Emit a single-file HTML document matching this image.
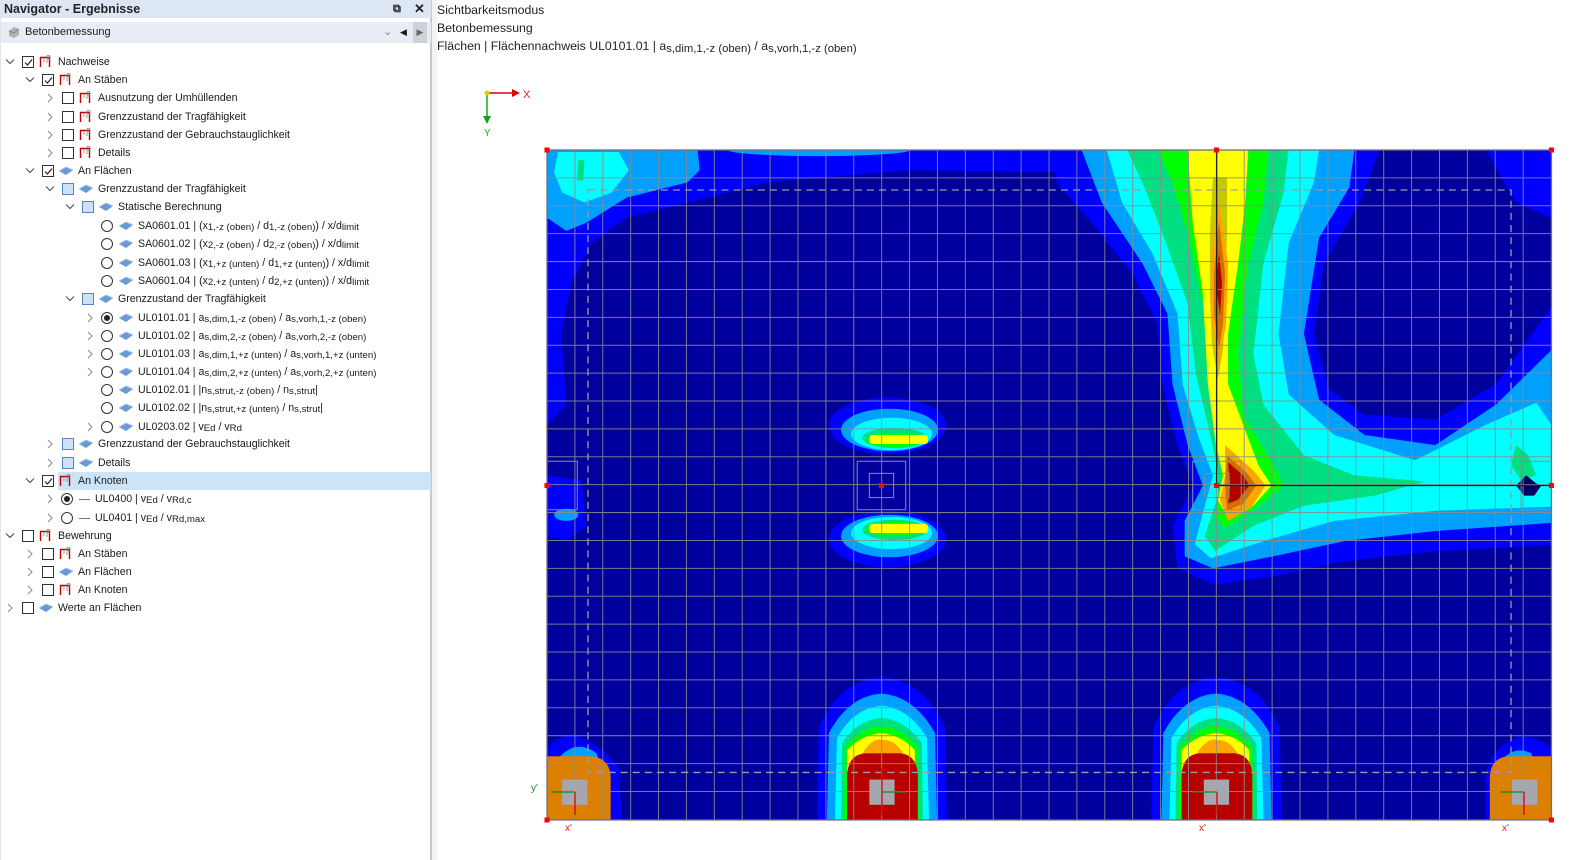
<!DOCTYPE html>
<html><head><meta charset="utf-8"><style>
*{margin:0;padding:0;box-sizing:border-box}
body{width:1585px;height:860px;position:relative;overflow:hidden;background:#fff;font-family:"Liberation Sans",sans-serif;color:#1a1a1a}
#panel{position:absolute;left:0;top:0;width:432px;height:860px;background:#fff;border-left:1px solid #e4e4ec;border-right:2px solid #c8c8d0}
#strip{position:absolute;left:432px;top:0;width:5px;height:860px;background:#f3f3f3}
.title{position:absolute;left:0;top:0;width:430px;height:18px;background:#dde7f3;font-weight:bold;font-size:12.5px;line-height:18px;padding-left:3px;color:#222}
.dd{position:absolute;left:0;top:22px;width:430px;height:21px;background:#e9ecf4;font-size:11px;line-height:21px}
.r{position:absolute;height:18px;line-height:18px;font-size:10.6px;white-space:nowrap}
.sel{position:absolute;left:57px;top:472px;width:373px;height:18px;background:#cce4f7}
.cb{position:absolute;width:12px;height:12px;border:1px solid #333;background:#fff}
.cb.p{background:#cde2f6;border-color:#5a86c0}
.rd{position:absolute;width:12px;height:12px;border:1px solid #333;border-radius:50%;background:#fff}
.rd.s::after{content:"";position:absolute;left:2px;top:2px;width:6px;height:6px;border-radius:50%;background:#222}
sub{font-size:9.6px;vertical-align:-1px}
.hd{position:absolute;left:437px;font-size:12.3px;color:#222}
.hd sub{font-size:11.3px;vertical-align:-2px}
</style></head><body>

<svg style="position:absolute;left:0;top:0" width="1585" height="860" xmlns="http://www.w3.org/2000/svg">
<defs><clipPath id="pl"><rect x="541" y="148" width="994" height="663"/></clipPath></defs>
<g transform="translate(547,150) scale(1.0105) translate(-541,-148)">
<g clip-path="url(#pl)">
<rect x="541" y="148" width="994" height="663" fill="#00009e"/>
<path d="M541,148 L1060,148 L1060,170 L900,168 L760,180 L700,195 L620,215 L585,240 L565,280 L555,330 L560,400 L541,420 Z" fill="#0000ff"/>
<path d="M541,148 L690,148 L692,168 L680,180 L620,195 L580,220 L560,228 L541,215 Z" fill="#00a0ff"/>
<ellipse cx="810" cy="148" rx="90" ry="6" fill="#00a0ff"/>
<path d="M552,150 L612,150 L622,168 L605,190 L578,200 L556,190 L548,170 Z" fill="#00ffff"/>
<path d="M572,158 L578,158 L577,178 L571,178 Z" fill="#00e080"/>
<path d="M541,470 L575,475 L580,520 L560,535 L541,530 Z" fill="#0000ff"/>
<ellipse cx="560" cy="509" rx="12" ry="6" fill="#00a0ff"/>
<path d="M1045,148 L1365,148 L1345,200 L1310,260 L1300,330 L1315,385 L1350,410 L1420,415 L1480,380 L1535,303 L1535,539 L1420,545 L1330,555 L1260,570 L1200,578 L1165,562 L1160,520 L1180,480 L1165,440 L1150,380 L1145,320 L1120,270 L1080,220 L1045,180 Z" fill="#0000ff"/>
<path d="M1470,148 L1535,148 L1535,215 L1500,200 Z" fill="#0000ff"/>
<path d="M1070,148 L1340,148 L1335,185 L1305,235 L1290,330 L1305,395 L1350,430 L1420,440 L1480,400 L1535,346 L1535,517 L1420,525 L1330,535 L1260,550 L1200,562 L1172,550 L1172,515 L1190,480 L1175,440 L1160,380 L1155,310 L1130,260 L1090,200 Z" fill="#00a0ff"/>
<path d="M1095,148 L1305,148 L1300,180 L1275,240 L1265,330 L1275,390 L1320,430 L1400,455 L1470,420 L1520,398 L1535,420 L1535,501 L1420,505 L1320,515 L1250,535 L1198,552 L1182,538 L1192,500 L1200,470 L1185,430 L1170,380 L1165,310 L1140,250 L1110,200 Z" fill="#00ffff"/>
<path d="M1115,148 L1275,148 L1270,190 L1250,260 L1240,350 L1250,400 L1290,450 L1340,470 L1410,476 L1360,490 L1290,500 L1240,520 L1202,545 L1192,530 L1205,490 L1205,465 L1195,420 L1183,370 L1175,300 L1150,230 L1130,180 Z" fill="#00e080"/>
<path d="M1500,440 L1512,450 L1520,470 L1505,475 L1495,460 Z" fill="#00e080"/>
<path d="M1145,148 L1255,148 L1250,200 L1235,260 L1225,350 L1230,410 L1260,460 L1270,480 L1245,500 L1212,522 L1202,510 L1210,480 L1205,440 L1195,380 L1190,300 L1175,230 L1160,180 Z" fill="#00ff00"/>
<path d="M1175,148 L1235,148 L1232,200 L1225,260 L1215,330 L1215,380 L1230,420 L1245,460 L1258,480 L1240,500 L1215,512 L1205,495 L1210,470 L1203,440 L1195,380 L1190,290 L1180,220 Z" fill="#ffff00"/>
<path d="M1200,175 L1214,175 L1214,230 L1212,290 L1210,345 L1205,375 L1199,340 L1197,290 L1197,230 Z" fill="#c8c800"/>
<path d="M1205,195 L1215,260 L1213,320 L1206,360 L1199,320 L1198,260 Z" fill="#ffa500"/>
<path d="M1206,218 L1212,270 L1210,320 L1206,345 L1201,310 L1201,270 Z" fill="#d07000"/>
<path d="M1206,250 L1209,280 L1207,312 L1203,280 Z" fill="#b00000"/>
<path d="M1212,440 L1240,465 L1252,480 L1238,502 L1215,515 L1207,495 L1212,470 Z" fill="#ffa500"/>
<path d="M1214,450 L1234,468 L1243,480 L1230,498 L1214,505 L1212,480 Z" fill="#d07000"/>
<path d="M1215,457 L1230,470 L1236,480 L1225,494 L1215,498 L1217,480 Z" fill="#b00000"/>
<path d="M1500,480 L1510,470 L1520,478 L1525,480 L1518,490 L1508,490 Z" fill="#000060"/>
<ellipse cx="878" cy="421" rx="58" ry="28" fill="#0000ff"/>
<ellipse cx="880" cy="425" rx="48" ry="21" fill="#00a0ff"/>
<ellipse cx="882" cy="429" rx="40" ry="16" fill="#00ffff"/>
<ellipse cx="885" cy="433" rx="32" ry="10" fill="#00e080"/>
<ellipse cx="886" cy="435" rx="29" ry="7" fill="#00ff00"/>
<rect x="860" y="430" width="58" height="9" rx="3" fill="#ffff00"/>
<ellipse cx="878" cy="533" rx="58" ry="28" fill="#0000ff"/>
<ellipse cx="880" cy="530" rx="48" ry="21" fill="#00a0ff"/>
<ellipse cx="882" cy="527" rx="40" ry="16" fill="#00ffff"/>
<ellipse cx="885" cy="524" rx="32" ry="10" fill="#00e080"/>
<ellipse cx="886" cy="523" rx="29" ry="7" fill="#00ff00"/>
<rect x="860" y="518" width="58" height="9" rx="3" fill="#ffff00"/>
<g id="col">
<path d="M808,811 L810,720 Q830,672 872,670 Q914,672 935,720 L937,811 Z" fill="#0000ff"/>
<path d="M818,811 L820,725 Q840,688 872,686 Q904,688 925,725 L927,811 Z" fill="#00a0ff"/>
<path d="M826,811 L828,730 Q845,700 872,698 Q899,700 917,730 L919,811 Z" fill="#00ffff"/>
<path d="M832,811 L833,735 Q848,712 872,710 Q896,712 912,735 L913,811 Z" fill="#00e080"/>
<path d="M835,811 L836,740 Q850,720 872,718 Q894,720 908,740 L909,811 Z" fill="#00ff00"/>
<path d="M838,811 L838,742 Q852,727 872,725 Q892,727 905,742 L905,811 Z" fill="#ffff00"/>
<path d="M845,760 Q860,728 872,732 Q890,730 900,760 Z" fill="#ffa500"/>
<path d="M838,811 L838,765 Q840,745 858,745 L888,745 Q906,745 908,765 L908,811 Z" fill="#b80000"/>
</g>
<use href="#col" transform="translate(331,0)"/>
<path d="M541,811 L541,740 Q560,720 580,732 Q600,742 612,760 L615,811 Z" fill="#0000ff"/>
<path d="M552,750 Q570,730 590,745 L595,760 L552,760Z" fill="#00a0ff"/>
<path d="M541,811 L541,748 L585,748 Q604,750 604,770 L604,811 Z" fill="#dd8000"/>
<path d="M1535,811 L1535,740 Q1510,720 1490,735 Q1472,748 1470,770 L1470,811 Z" fill="#0000ff"/>
<path d="M1480,760 Q1495,735 1515,745 L1520,760 Z" fill="#00a0ff"/>
<path d="M1535,811 L1535,748 L1492,748 Q1474,750 1474,770 L1474,811 Z" fill="#dd8000"/>
<g stroke="#8c8c8c" stroke-width="1" opacity="0.85">
<path d="M568.6,148V811M596.2,148V811M623.8,148V811M651.4,148V811M679,148V811M706.6,148V811M734.2,148V811M761.8,148V811M789.4,148V811M817,148V811M844.6,148V811M872.2,148V811M899.8,148V811M927.4,148V811M955,148V811M982.6,148V811M1010.2,148V811M1037.8,148V811M1065.4,148V811M1093,148V811M1120.6,148V811M1148.2,148V811M1175.8,148V811M1203.4,148V811M1231,148V811M1258.6,148V811M1286.2,148V811M1313.8,148V811M1341.4,148V811M1369,148V811M1396.6,148V811M1424.2,148V811M1451.8,148V811M1479.4,148V811M1507,148V811"/>
<path d="M541,175.6H1535M541,203.2H1535M541,230.8H1535M541,258.4H1535M541,286H1535M541,313.6H1535M541,341.2H1535M541,368.8H1535M541,396.4H1535M541,424H1535M541,451.6H1535M541,479.2H1535M541,506.8H1535M541,534.4H1535M541,562H1535M541,589.6H1535M541,617.2H1535M541,644.8H1535M541,672.4H1535M541,700H1535M541,727.6H1535M541,755.2H1535M541,782.8H1535"/>
</g>
<g fill="none" stroke="#8c8c8c" stroke-width="1">
<rect x="848" y="456" width="48" height="48"/><rect x="860" y="468" width="24" height="24"/>
<rect x="1180" y="456" width="48" height="48"/><rect x="1192" y="468" width="24" height="24"/>
<rect x="541" y="456" width="30" height="48"/><rect x="1505" y="456" width="30" height="48"/>
</g>
<rect x="581.6" y="187.6" width="913.4" height="576.4" fill="none" stroke="#9a9aa8" stroke-width="1.3" stroke-dasharray="7,5"/>
<g fill="#a6a6ae"><rect x="556" y="771" width="25" height="25"/><rect x="860" y="771" width="25" height="25"/><rect x="1191" y="771" width="25" height="25"/><rect x="1496" y="771" width="25" height="25"/></g>
</g>
<rect x="541" y="148" width="994" height="663" fill="none" stroke="#707080" stroke-width="1.3"/>
<path d="M1203.7,148V480H1535" stroke="#202020" stroke-width="1.3" fill="none"/>
<g fill="#ff0000"><rect x="538.5" y="145.5" width="5" height="5"/><rect x="1201" y="145.5" width="5" height="5"/><rect x="1532.5" y="145.5" width="5" height="5"/><rect x="538.5" y="477.5" width="5" height="5"/><rect x="869.5" y="477.5" width="5" height="5"/><rect x="1201" y="477.5" width="5" height="5"/><rect x="1532.5" y="477.5" width="5" height="5"/><rect x="538.5" y="808.5" width="5" height="5"/><rect x="1532.5" y="808.5" width="5" height="5"/></g>
</g>
<g stroke-width="1.3">
<path d="M575,792V815" stroke="#e00000"/><path d="M575,792H551" stroke="#109010"/>
<path d="M882,792V815" stroke="#e00000"/><path d="M882,792H906" stroke="#109010"/><path d="M882,792V768" stroke="#e00000"/>
<path d="M1217,792V815" stroke="#e00000"/><path d="M1217,792H1193" stroke="#109010"/>
<path d="M1524,792V815" stroke="#e00000"/><path d="M1524,792H1500" stroke="#109010"/>
</g>
<g font-family="Liberation Sans" font-size="10"><text x="565" y="831" fill="#e02020">x'</text><text x="531" y="791" fill="#208020">y'</text><text x="1199" y="831" fill="#e02020">x'</text><text x="1502" y="831" fill="#e02020">x'</text></g>
<path d="M487,93H512" stroke="#e00000" stroke-width="1.5"/><path d="M512,89L520,93L512,97Z" fill="#e00000"/>
<path d="M487,93V118" stroke="#10b010" stroke-width="1.5"/><path d="M483,116L487,124L491,116Z" fill="#10a010"/>
<circle cx="487" cy="93" r="2.5" fill="#e0d000"/>
<text x="523" y="98" font-family="Liberation Sans" font-size="11" fill="#e02020">X</text>
<text x="484" y="136" font-family="Liberation Sans" font-size="10" fill="#20b020">Y</text>
</svg>

<div class="hd" style="top:3px">Sichtbarkeitsmodus</div>
<div class="hd" style="top:21px">Betonbemessung</div>
<div class="hd" style="top:39px">Flächen | Flächennachweis UL0101.01 | a<sub>s,dim,1,-z (oben)</sub> / a<sub>s,vorh,1,-z (oben)</sub></div>

<div id="panel">
<div class="title">Navigator - Ergebnisse<span style="position:absolute;left:392px;top:0;font-size:11px">⧉</span><span style="position:absolute;left:413px;top:0;font-size:13px">✕</span></div>
<div class="dd"><svg style="position:absolute;left:6px;top:4px" width="14" height="13"><path d="M2,5 L7,1 L12,3 L12,9 L7,12 L2,10Z" fill="#b0b0b0"/><path d="M2,5 L7,7 L12,3" stroke="#888" fill="none"/></svg><span style="position:absolute;left:24px">Betonbemessung</span><span style="position:absolute;left:382px;color:#888">⌄</span><span style="position:absolute;left:399px;font-size:9px">◀</span><span style="position:absolute;left:412px;width:14px;height:21px;background:#cfd1d8;font-size:9px;text-align:center;color:#666">▶</span></div>
<div class="sel"></div>
</div>
<div id="strip"></div>

<svg width="0" height="0" style="position:absolute"><defs>
<g id="pt"><path d="M1.5,12V2.5H10.5V12" stroke="#c00000" stroke-width="1.4" fill="none"/><path d="M5,3V7M8,3V8" stroke="#999" stroke-width="1"/><circle cx="9.5" cy="2" r="1.7" fill="none" stroke="#888" stroke-width="0.8"/></g>
<g id="sf"><path d="M1,6 L8,2 L15,5 L8,10Z" fill="#6a9ad6"/><path d="M1,6 L8,2 L15,5" fill="none" stroke="#a9c6ea"/></g>
</defs></svg>

<div style="position:absolute;left:0;top:0;width:430px;height:860px;font-size:11px">
<svg style="position:absolute;left:5px;top:58px" width="10" height="8"><path d="M1,1.5L5,5.5L9,1.5" stroke="#444" fill="none"/></svg>
<div class="cb" style="left:22px;top:56px"></div><svg style="position:absolute;left:24px;top:58px" width="9" height="9"><path d="M1,4.5L3.5,7L8,1.5" stroke="#222" fill="none" stroke-width="1.2"/></svg>
<svg style="position:absolute;left:39px;top:55px" width="14" height="14"><use href="#pt"/></svg>
<div class="r" style="left:58px;top:53px">Nachweise</div>

<svg style="position:absolute;left:25px;top:76px" width="10" height="8"><path d="M1,1.5L5,5.5L9,1.5" stroke="#444" fill="none"/></svg>
<div class="cb" style="left:42px;top:74px"></div><svg style="position:absolute;left:44px;top:76px" width="9" height="9"><path d="M1,4.5L3.5,7L8,1.5" stroke="#222" fill="none" stroke-width="1.2"/></svg>
<svg style="position:absolute;left:59px;top:73px" width="14" height="14"><use href="#pt"/></svg>
<div class="r" style="left:78px;top:71px">An Stäben</div>

<svg style="position:absolute;left:46px;top:93px" width="8" height="10"><path d="M2,1L6,5L2,9" stroke="#888" fill="none"/></svg>
<div class="cb" style="left:62px;top:92px"></div><svg style="position:absolute;left:79px;top:91px" width="14" height="14"><use href="#pt"/></svg>
<div class="r" style="left:98px;top:89px">Ausnutzung der Umhüllenden</div>

<svg style="position:absolute;left:46px;top:112px" width="8" height="10"><path d="M2,1L6,5L2,9" stroke="#888" fill="none"/></svg>
<div class="cb" style="left:62px;top:111px"></div><svg style="position:absolute;left:79px;top:110px" width="14" height="14"><use href="#pt"/></svg>
<div class="r" style="left:98px;top:108px">Grenzzustand der Tragfähigkeit</div>

<svg style="position:absolute;left:46px;top:130px" width="8" height="10"><path d="M2,1L6,5L2,9" stroke="#888" fill="none"/></svg>
<div class="cb" style="left:62px;top:129px"></div><svg style="position:absolute;left:79px;top:128px" width="14" height="14"><use href="#pt"/></svg>
<div class="r" style="left:98px;top:126px">Grenzzustand der Gebrauchstauglichkeit</div>

<svg style="position:absolute;left:46px;top:148px" width="8" height="10"><path d="M2,1L6,5L2,9" stroke="#888" fill="none"/></svg>
<div class="cb" style="left:62px;top:147px"></div><svg style="position:absolute;left:79px;top:146px" width="14" height="14"><use href="#pt"/></svg>
<div class="r" style="left:98px;top:144px">Details</div>

<svg style="position:absolute;left:25px;top:167px" width="10" height="8"><path d="M1,1.5L5,5.5L9,1.5" stroke="#444" fill="none"/></svg>
<div class="cb" style="left:42px;top:165px"></div><svg style="position:absolute;left:44px;top:167px" width="9" height="9"><path d="M1,4.5L3.5,7L8,1.5" stroke="#222" fill="none" stroke-width="1.2"/></svg>
<svg style="position:absolute;left:58px;top:165px" width="16" height="12"><use href="#sf"/></svg>
<div class="r" style="left:78px;top:162px">An Flächen</div>

<svg style="position:absolute;left:45px;top:185px" width="10" height="8"><path d="M1,1.5L5,5.5L9,1.5" stroke="#444" fill="none"/></svg>
<div class="cb p" style="left:62px;top:183px"></div><svg style="position:absolute;left:78px;top:183px" width="16" height="12"><use href="#sf"/></svg>
<div class="r" style="left:98px;top:180px">Grenzzustand der Tragfähigkeit</div>

<svg style="position:absolute;left:65px;top:203px" width="10" height="8"><path d="M1,1.5L5,5.5L9,1.5" stroke="#444" fill="none"/></svg>
<div class="cb p" style="left:82px;top:201px"></div><svg style="position:absolute;left:98px;top:201px" width="16" height="12"><use href="#sf"/></svg>
<div class="r" style="left:118px;top:198px">Statische Berechnung</div>

<div class="rd" style="left:101px;top:220px"></div><svg style="position:absolute;left:118px;top:220px" width="16" height="12"><use href="#sf"/></svg>
<div class="r" style="left:138px;top:217px">SA0601.01 | (x<sub>1,-z (oben)</sub> / d<sub>1,-z (oben)</sub>) / x/d<sub>limit</sub></div>
<div class="rd" style="left:101px;top:238px"></div><svg style="position:absolute;left:118px;top:238px" width="16" height="12"><use href="#sf"/></svg>
<div class="r" style="left:138px;top:235px">SA0601.02 | (x<sub>2,-z (oben)</sub> / d<sub>2,-z (oben)</sub>) / x/d<sub>limit</sub></div>
<div class="rd" style="left:101px;top:257px"></div><svg style="position:absolute;left:118px;top:257px" width="16" height="12"><use href="#sf"/></svg>
<div class="r" style="left:138px;top:254px">SA0601.03 | (x<sub>1,+z (unten)</sub> / d<sub>1,+z (unten)</sub>) / x/d<sub>limit</sub></div>
<div class="rd" style="left:101px;top:275px"></div><svg style="position:absolute;left:118px;top:275px" width="16" height="12"><use href="#sf"/></svg>
<div class="r" style="left:138px;top:272px">SA0601.04 | (x<sub>2,+z (unten)</sub> / d<sub>2,+z (unten)</sub>) / x/d<sub>limit</sub></div>

<svg style="position:absolute;left:65px;top:295px" width="10" height="8"><path d="M1,1.5L5,5.5L9,1.5" stroke="#444" fill="none"/></svg>
<div class="cb p" style="left:82px;top:293px"></div><svg style="position:absolute;left:98px;top:293px" width="16" height="12"><use href="#sf"/></svg>
<div class="r" style="left:118px;top:290px">Grenzzustand der Tragfähigkeit</div>

<svg style="position:absolute;left:86px;top:313px" width="8" height="10"><path d="M2,1L6,5L2,9" stroke="#888" fill="none"/></svg>
<div class="rd s" style="left:101px;top:312px"></div><svg style="position:absolute;left:118px;top:312px" width="16" height="12"><use href="#sf"/></svg>
<div class="r" style="left:138px;top:309px">UL0101.01 | a<sub>s,dim,1,-z (oben)</sub> / a<sub>s,vorh,1,-z (oben)</sub></div>
<svg style="position:absolute;left:86px;top:331px" width="8" height="10"><path d="M2,1L6,5L2,9" stroke="#888" fill="none"/></svg>
<div class="rd" style="left:101px;top:330px"></div><svg style="position:absolute;left:118px;top:330px" width="16" height="12"><use href="#sf"/></svg>
<div class="r" style="left:138px;top:327px">UL0101.02 | a<sub>s,dim,2,-z (oben)</sub> / a<sub>s,vorh,2,-z (oben)</sub></div>
<svg style="position:absolute;left:86px;top:349px" width="8" height="10"><path d="M2,1L6,5L2,9" stroke="#888" fill="none"/></svg>
<div class="rd" style="left:101px;top:348px"></div><svg style="position:absolute;left:118px;top:348px" width="16" height="12"><use href="#sf"/></svg>
<div class="r" style="left:138px;top:345px">UL0101.03 | a<sub>s,dim,1,+z (unten)</sub> / a<sub>s,vorh,1,+z (unten)</sub></div>
<svg style="position:absolute;left:86px;top:367px" width="8" height="10"><path d="M2,1L6,5L2,9" stroke="#888" fill="none"/></svg>
<div class="rd" style="left:101px;top:366px"></div><svg style="position:absolute;left:118px;top:366px" width="16" height="12"><use href="#sf"/></svg>
<div class="r" style="left:138px;top:363px">UL0101.04 | a<sub>s,dim,2,+z (unten)</sub> / a<sub>s,vorh,2,+z (unten)</sub></div>
<div class="rd" style="left:101px;top:384px"></div><svg style="position:absolute;left:118px;top:384px" width="16" height="12"><use href="#sf"/></svg>
<div class="r" style="left:138px;top:381px">UL0102.01 | |n<sub>s,strut,-z (oben)</sub> / n<sub>s,strut</sub>|</div>
<div class="rd" style="left:101px;top:402px"></div><svg style="position:absolute;left:118px;top:402px" width="16" height="12"><use href="#sf"/></svg>
<div class="r" style="left:138px;top:399px">UL0102.02 | |n<sub>s,strut,+z (unten)</sub> / n<sub>s,strut</sub>|</div>
<svg style="position:absolute;left:86px;top:422px" width="8" height="10"><path d="M2,1L6,5L2,9" stroke="#888" fill="none"/></svg>
<div class="rd" style="left:101px;top:421px"></div><svg style="position:absolute;left:118px;top:421px" width="16" height="12"><use href="#sf"/></svg>
<div class="r" style="left:138px;top:418px">UL0203.02 | v<sub>Ed</sub> / v<sub>Rd</sub></div>

<svg style="position:absolute;left:46px;top:439px" width="8" height="10"><path d="M2,1L6,5L2,9" stroke="#888" fill="none"/></svg>
<div class="cb p" style="left:62px;top:438px"></div><svg style="position:absolute;left:78px;top:438px" width="16" height="12"><use href="#sf"/></svg>
<div class="r" style="left:98px;top:435px">Grenzzustand der Gebrauchstauglichkeit</div>
<svg style="position:absolute;left:46px;top:458px" width="8" height="10"><path d="M2,1L6,5L2,9" stroke="#888" fill="none"/></svg>
<div class="cb p" style="left:62px;top:457px"></div><svg style="position:absolute;left:78px;top:457px" width="16" height="12"><use href="#sf"/></svg>
<div class="r" style="left:98px;top:454px">Details</div>

<svg style="position:absolute;left:25px;top:477px" width="10" height="8"><path d="M1,1.5L5,5.5L9,1.5" stroke="#444" fill="none"/></svg>
<div class="cb" style="left:42px;top:475px"></div><svg style="position:absolute;left:44px;top:477px" width="9" height="9"><path d="M1,4.5L3.5,7L8,1.5" stroke="#222" fill="none" stroke-width="1.2"/></svg>
<svg style="position:absolute;left:59px;top:474px" width="14" height="14"><use href="#pt"/></svg>
<div class="r" style="left:78px;top:472px">An Knoten</div>

<svg style="position:absolute;left:46px;top:494px" width="8" height="10"><path d="M2,1L6,5L2,9" stroke="#888" fill="none"/></svg>
<div class="rd s" style="left:61px;top:493px"></div><div style="position:absolute;left:79px;top:499px;width:11px;height:1px;background:#777"></div>
<div class="r" style="left:95px;top:490px">UL0400 | v<sub>Ed</sub> / v<sub>Rd,c</sub></div>
<svg style="position:absolute;left:46px;top:513px" width="8" height="10"><path d="M2,1L6,5L2,9" stroke="#888" fill="none"/></svg>
<div class="rd" style="left:61px;top:512px"></div><div style="position:absolute;left:79px;top:518px;width:11px;height:1px;background:#777"></div>
<div class="r" style="left:95px;top:509px">UL0401 | v<sub>Ed</sub> / v<sub>Rd,max</sub></div>

<svg style="position:absolute;left:5px;top:532px" width="10" height="8"><path d="M1,1.5L5,5.5L9,1.5" stroke="#444" fill="none"/></svg>
<div class="cb" style="left:22px;top:530px"></div><svg style="position:absolute;left:39px;top:529px" width="14" height="14"><use href="#pt"/></svg>
<div class="r" style="left:58px;top:527px">Bewehrung</div>

<svg style="position:absolute;left:26px;top:549px" width="8" height="10"><path d="M2,1L6,5L2,9" stroke="#888" fill="none"/></svg>
<div class="cb" style="left:42px;top:548px"></div><svg style="position:absolute;left:59px;top:547px" width="14" height="14"><use href="#pt"/></svg>
<div class="r" style="left:78px;top:545px">An Stäben</div>
<svg style="position:absolute;left:26px;top:567px" width="8" height="10"><path d="M2,1L6,5L2,9" stroke="#888" fill="none"/></svg>
<div class="cb" style="left:42px;top:566px"></div><svg style="position:absolute;left:58px;top:566px" width="16" height="12"><use href="#sf"/></svg>
<div class="r" style="left:78px;top:563px">An Flächen</div>
<svg style="position:absolute;left:26px;top:585px" width="8" height="10"><path d="M2,1L6,5L2,9" stroke="#888" fill="none"/></svg>
<div class="cb" style="left:42px;top:584px"></div><svg style="position:absolute;left:59px;top:583px" width="14" height="14"><use href="#pt"/></svg>
<div class="r" style="left:78px;top:581px">An Knoten</div>

<svg style="position:absolute;left:6px;top:603px" width="8" height="10"><path d="M2,1L6,5L2,9" stroke="#888" fill="none"/></svg>
<div class="cb" style="left:22px;top:602px"></div><svg style="position:absolute;left:38px;top:602px" width="16" height="12"><use href="#sf"/></svg>
<div class="r" style="left:58px;top:599px">Werte an Flächen</div>
</div>
</body></html>
